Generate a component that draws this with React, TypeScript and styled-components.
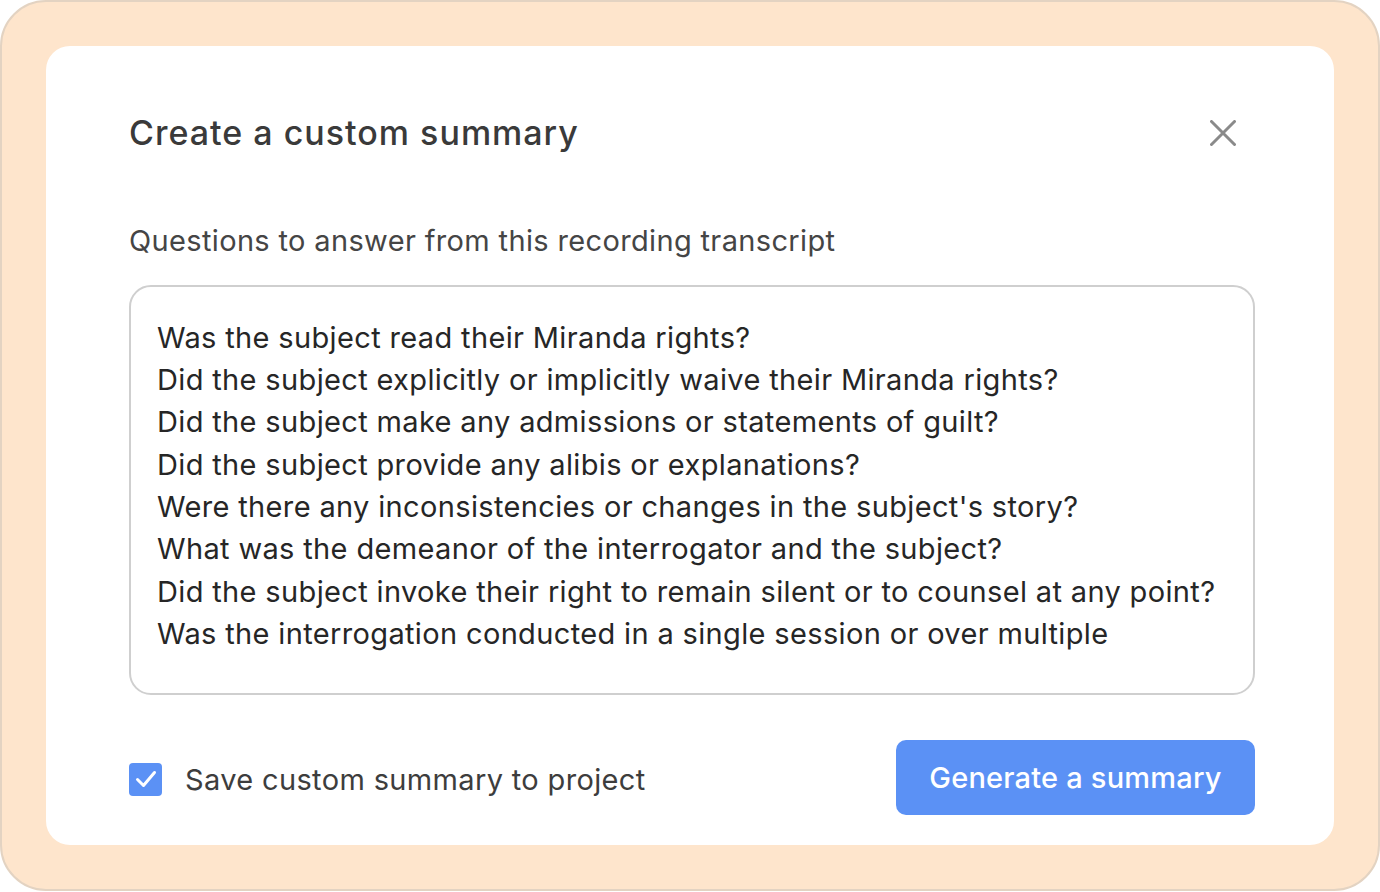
import React, { useState } from 'react';
import styled, { createGlobalStyle } from 'styled-components';

const GlobalStyle = createGlobalStyle`
  html, body {
    margin: 0;
    padding: 0;
    background: #ffffff;
    font-family: Inter, "Noto Sans", sans-serif;
  }
  * { box-sizing: border-box; }
`;

const Frame = styled.div`
  width: 1380px;
  height: 891px;
  background: #fee5cc;
  border: 2px solid #e3d3c2;
  border-radius: 46px;
  padding: 44px;
`;

const Dialog = styled.div`
  background: #ffffff;
  border-radius: 24px;
  height: 100%;
  padding: 63px 79px 30px 83px;
  display: flex;
  flex-direction: column;
`;

const Header = styled.div`
  display: flex;
  justify-content: space-between;
  align-items: center;
  height: 48px;
`;

const Title = styled.h2`
  margin: 0;
  font-size: 34px;
  font-weight: 500;
  color: #3a3a3a;
  letter-spacing: 1px;
`;

const CloseButton = styled.button`
  background: none;
  border: none;
  padding: 0;
  margin-right: 18px;
  width: 28px;
  height: 28px;
  display: flex;
  align-items: center;
  justify-content: center;
  cursor: pointer;
  color: #8a8a8a;
`;

const Label = styled.label`
  margin-top: 66px;
  font-size: 29px;
  letter-spacing: 0.35px;
  color: #454545;
  line-height: 36px;
`;

const QuestionBox = styled.div`
  margin-top: 26px;
  border: 2px solid #cfcfcf;
  border-radius: 22px;
  padding: 30px 26px 36px;
  height: 411px;
  font-size: 29px;
  letter-spacing: 0.35px;
  line-height: 42.3px;
  color: #262626;
`;

const Line = styled.div`
  white-space: nowrap;
`;

const Footer = styled.div`
  margin-top: 45px;
  display: flex;
  justify-content: space-between;
  align-items: center;
`;

const CheckRow = styled.label`
  display: flex;
  align-items: center;
  gap: 23px;
  font-size: 29px;
  letter-spacing: 0.35px;
  color: #3d3d3d;
  cursor: pointer;
  margin-top: 3px;
`;

const CheckBox = styled.span<{ $checked: boolean }>`
  width: 33px;
  height: 33px;
  border-radius: 4px;
  background: ${({ $checked }) => ($checked ? '#5b91f5' : '#ffffff')};
  border: ${({ $checked }) => ($checked ? 'none' : '2px solid #bbb')};
  display: flex;
  align-items: center;
  justify-content: center;
`;

const PrimaryButton = styled.button`
  width: 359px;
  height: 75px;
  border: none;
  border-radius: 10px;
  background: #5b91f5;
  color: #ffffff;
  font-family: Inter, "Noto Sans", sans-serif;
  font-size: 29px;
  font-weight: 500;
  letter-spacing: 0.2px;
  cursor: pointer;
`;

const questions = [
  'Was the subject read their Miranda rights?',
  'Did the subject explicitly or implicitly waive their Miranda rights?',
  'Did the subject make any admissions or statements of guilt?',
  'Did the subject provide any alibis or explanations?',
  "Were there any inconsistencies or changes in the subject's story?",
  'What was the demeanor of the interrogator and the subject?',
  'Did the subject invoke their right to remain silent or to counsel at any point?',
  'Was the interrogation conducted in a single session or over multiple',
];

export default function App() {
  const [saved, setSaved] = useState(true);

  return (
    <>
      <GlobalStyle />
      <Frame>
        <Dialog>
          <Header>
            <Title>Create a custom summary</Title>
            <CloseButton aria-label="Close">
              <svg width="26" height="26" viewBox="0 0 26 26" fill="none">
                <path d="M1.5 1.5L24.5 24.5M24.5 1.5L1.5 24.5" stroke="currentColor" strokeWidth="3" strokeLinecap="round" />
              </svg>
            </CloseButton>
          </Header>
          <Label>Questions to answer from this recording transcript</Label>
          <QuestionBox>
            {questions.map((q) => (
              <Line key={q}>{q}</Line>
            ))}
          </QuestionBox>
          <Footer>
            <CheckRow onClick={() => setSaved((s) => !s)}>
              <CheckBox $checked={saved}>
                {saved && (
                  <svg width="24" height="24" viewBox="0 0 24 24" fill="none">
                    <path d="M3.5 12.5L9.5 18.5L20.5 5.5" stroke="#ffffff" strokeWidth="3" strokeLinecap="round" strokeLinejoin="round" />
                  </svg>
                )}
              </CheckBox>
              Save custom summary to project
            </CheckRow>
            <PrimaryButton>Generate a summary</PrimaryButton>
          </Footer>
        </Dialog>
      </Frame>
    </>
  );
}
